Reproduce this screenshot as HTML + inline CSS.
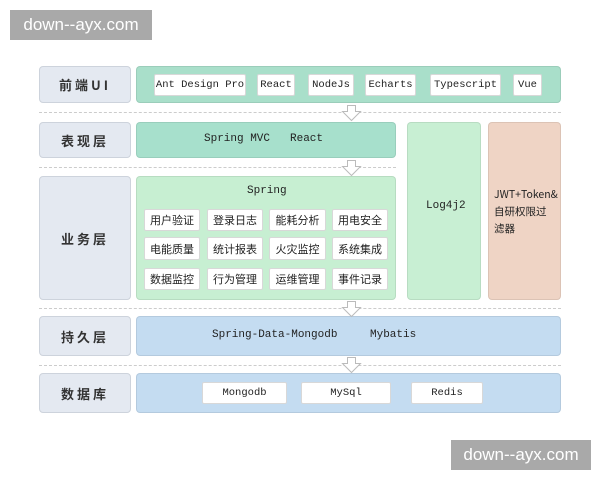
<!DOCTYPE html>
<html><head><meta charset="utf-8"><style>
body{margin:0;width:600px;height:480px;background:#fff;position:relative;overflow:hidden;font-family:"Liberation Mono","Noto Sans CJK SC",monospace;}
div{position:absolute;box-sizing:border-box;}
.wm{background:#a9a9a9;color:#fff;font-family:"Liberation Sans",sans-serif;font-size:17px;display:flex;align-items:center;justify-content:center;}
.lab{left:39px;width:92px;background:#e4e9f1;border:1px solid #cdd3dc;border-radius:4px;display:flex;align-items:center;justify-content:center;font-family:"Noto Sans CJK SC",sans-serif;font-size:13px;letter-spacing:3px;color:#333;font-weight:bold;}
.box{border-radius:4px;border:1px solid rgba(0,0,0,0.08);}
.w{background:#fff;border:1px solid #d8d8d8;border-radius:2px;display:flex;align-items:center;justify-content:center;font-size:10.5px;color:#222;}
.c{font-family:"Noto Sans CJK SC",sans-serif;font-size:11px;}
.t{font-size:11px;color:#222;white-space:nowrap;}
.dash{left:39px;width:522px;height:0;border-top:1px dashed #ccc;}
</style></head><body>
<div class="wm" style="left:10px;top:10px;width:142px;height:30px;">down--ayx.com</div>
<div class="wm" style="left:451px;top:440px;width:140px;height:30px;">down--ayx.com</div>

<div class="lab" style="top:66px;height:37px;">前端UI</div>
<div class="box" style="left:136px;top:66px;width:425px;height:37px;background:#a9dfca;"></div>
<div class="w" style="left:154px;top:74px;width:92px;height:22px;">Ant Design Pro</div>
<div class="w" style="left:257px;top:74px;width:38px;height:22px;">React</div>
<div class="w" style="left:308px;top:74px;width:46px;height:22px;">NodeJs</div>
<div class="w" style="left:365px;top:74px;width:51px;height:22px;">Echarts</div>
<div class="w" style="left:430px;top:74px;width:71px;height:22px;">Typescript</div>
<div class="w" style="left:513px;top:74px;width:29px;height:22px;">Vue</div>

<div class="dash" style="top:112px;"></div>
<div class="lab" style="top:122px;height:36px;">表现层</div>
<div class="box" style="left:136px;top:122px;width:260px;height:36px;background:#a7e0cc;"></div>
<div class="t" style="left:204px;top:133px;">Spring MVC</div>
<div class="t" style="left:290px;top:133px;">React</div>
<div class="box" style="left:407px;top:122px;width:74px;height:178px;background:#c8efd3;"></div>
<div class="t" style="left:426px;top:200px;">Log4j2</div>
<div class="box" style="left:488px;top:122px;width:73px;height:178px;background:#efd4c5;"></div>
<div class="c" style="left:494px;top:186px;font-size:10.5px;line-height:17px;color:#222;">JWT+Token&amp;<br>自研权限过<br>滤器</div>

<div class="dash" style="top:167px;width:357px;"></div>
<div class="lab" style="top:176px;height:124px;">业务层</div>
<div class="box" style="left:136px;top:176px;width:260px;height:124px;background:#c7efd2;"></div>
<div class="t" style="left:247px;top:185px;">Spring</div>
<div class="w c" style="left:144px;top:209px;width:56px;height:22px;">用户验证</div>
<div class="w c" style="left:207px;top:209px;width:56px;height:22px;">登录日志</div>
<div class="w c" style="left:269px;top:209px;width:57px;height:22px;">能耗分析</div>
<div class="w c" style="left:332px;top:209px;width:56px;height:22px;">用电安全</div>
<div class="w c" style="left:144px;top:237px;width:56px;height:23px;">电能质量</div>
<div class="w c" style="left:207px;top:237px;width:56px;height:23px;">统计报表</div>
<div class="w c" style="left:269px;top:237px;width:57px;height:23px;">火灾监控</div>
<div class="w c" style="left:332px;top:237px;width:56px;height:23px;">系统集成</div>
<div class="w c" style="left:144px;top:268px;width:56px;height:22px;">数据监控</div>
<div class="w c" style="left:207px;top:268px;width:56px;height:22px;">行为管理</div>
<div class="w c" style="left:269px;top:268px;width:57px;height:22px;">运维管理</div>
<div class="w c" style="left:332px;top:268px;width:56px;height:22px;">事件记录</div>

<div class="dash" style="top:308px;"></div>
<div class="lab" style="top:316px;height:40px;">持久层</div>
<div class="box" style="left:136px;top:316px;width:425px;height:40px;background:#c4dcf1;"></div>
<div class="t" style="left:212px;top:329px;">Spring-Data-Mongodb</div>
<div class="t" style="left:370px;top:329px;">Mybatis</div>

<div class="dash" style="top:365px;"></div>
<div class="lab" style="top:373px;height:40px;">数据库</div>
<div class="box" style="left:136px;top:373px;width:425px;height:40px;background:#c4dcf1;"></div>
<div class="w" style="left:202px;top:382px;width:85px;height:22px;">Mongodb</div>
<div class="w" style="left:301px;top:382px;width:90px;height:22px;">MySql</div>
<div class="w" style="left:411px;top:382px;width:72px;height:22px;">Redis</div>

<svg style="position:absolute;left:0;top:0" width="600" height="480">
<g fill="#fff" stroke="#bbb" stroke-width="1">
<path d="M347.5 105.5h8v6h5l-9 9-9-9h5z"/>
<path d="M347.5 160.5h8v6h5l-9 9-9-9h5z"/>
<path d="M347.5 301.5h8v6h5l-9 9-9-9h5z"/>
<path d="M347.5 357.5h8v6h5l-9 9-9-9h5z"/>
</g></svg>
</body></html>
